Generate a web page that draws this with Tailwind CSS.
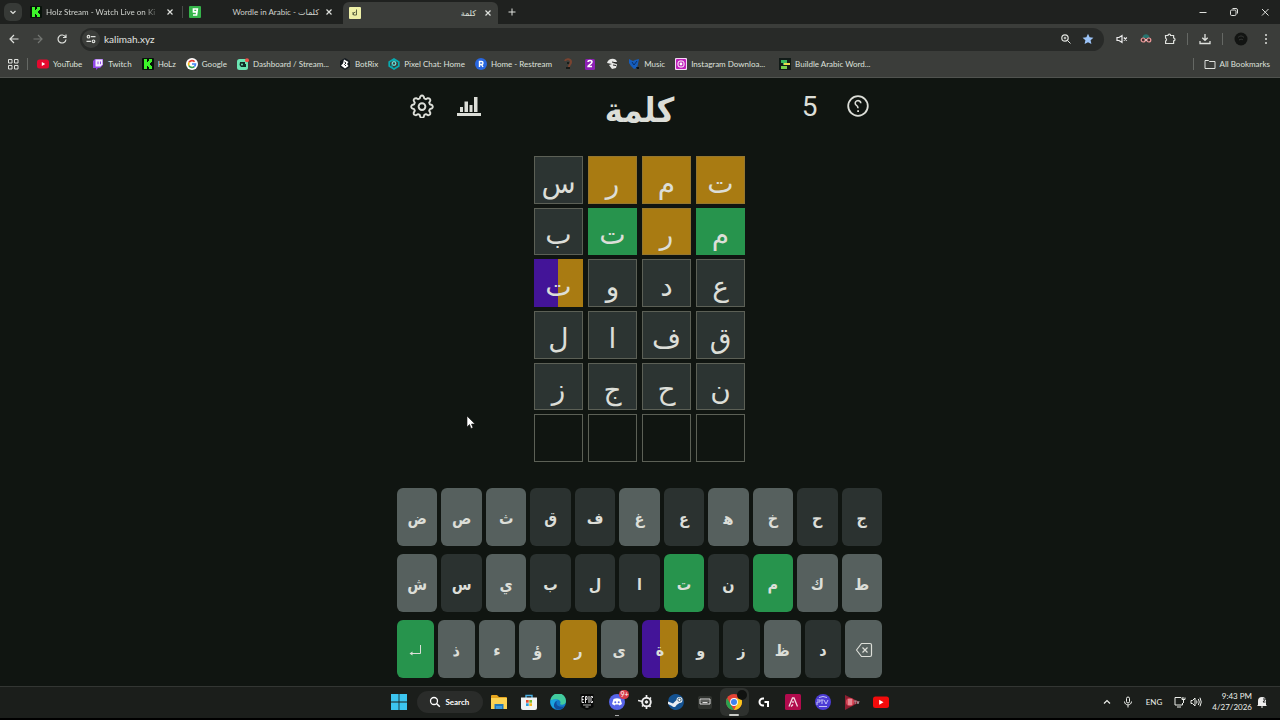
<!DOCTYPE html>
<html lang="en">
<head>
<meta charset="utf-8">
<title>كلمة</title>
<script src="https://cdn.jsdelivr.net/npm/@tailwindcss/browser@4"></script>
</head>
<body class="flex h-screen flex-col overflow-hidden bg-[#101511] font-['Lato','DejaVu_Sans',sans-serif] text-[8px] leading-3 text-[#dfe1dd]">

<!-- Tab strip -->
<header class="shrink-0">
  <div class="flex h-6 items-center bg-[#1f211f]">
    <button aria-label="Search tabs" class="ml-1 flex size-[18px] items-center justify-center rounded-md bg-[#373a37]">
      <svg viewBox="0 0 10 10" class="size-2.5 fill-none stroke-current"><path d="M2.5 4 5 6.4 7.500 4" stroke-width="1.300"/></svg>
    </button>
    <div class="ml-2 flex w-[144px] items-center">
      <svg viewBox="0 0 12 12" class="size-3 shrink-0"><rect width="12" height="12" rx="1" fill="#08120a"/><path d="M2 1h3v3h1V3h1V1h3v3H9v1H8v2h1v1h1v3H7V9H6V8H5v3H2z" fill="#3df52a"/></svg>
      <span class="ml-1 w-[115px] whitespace-nowrap mask-r-from-85% text-[#cfd2cd]">Holz Stream - Watch Live on Ki</span>
      <button aria-label="Close Holz Stream" class="ml-auto"><svg viewBox="0 0 8 8" class="size-2 stroke-current"><path d="M1.500 1.500l5 5m0-5l-5 5" stroke-width="1.200"/></svg></button>
    </div>
    <span class="ml-2 h-3 w-px bg-[#484b48]"></span>
    <div class="ml-1.5 flex w-[144px] items-center">
      <svg viewBox="0 0 12 12" class="size-3 shrink-0"><rect width="12" height="12" rx="1" fill="#35b44a"/><path d="M8 5.800H4.500V3H8.300L7.500 9H4" fill="none" stroke="#fff" stroke-width="1.700"/></svg>
      <span dir="rtl" class="ml-auto whitespace-nowrap text-[#cfd2cd]">كلمات - <bdi>Wordle in Arabic</bdi></span>
      <button aria-label="Close Wordle in Arabic" class="ml-1.5"><svg viewBox="0 0 8 8" class="size-2 stroke-current"><path d="M1.500 1.500l5 5m0-5l-5 5" stroke-width="1.200"/></svg></button>
    </div>
    <div class="mt-0.5 ml-2.5 flex h-[22px] w-[155px] items-center rounded-t-md bg-[#3b3d3a] px-1.5">
      <svg viewBox="0 0 12 12" class="size-3 shrink-0"><rect width="12" height="12" rx="1" fill="#eef0a8"/><path d="M7.500 2.500v5.500H4.500V6l2-1M4 5v3" fill="none" stroke="#5c6340"/></svg>
      <span class="ml-auto">كلمة</span>
      <button aria-label="Close Kalimah" class="ml-2"><svg viewBox="0 0 8 8" class="size-2 stroke-current"><path d="M1.500 1.500l5 5m0-5l-5 5" stroke-width="1.200"/></svg></button>
    </div>
    <button aria-label="New tab" class="ml-2.5"><svg viewBox="0 0 8 8" class="size-2 stroke-current"><path d="M4 .5v7M.5 4h7"/></svg></button>
    <div class="mr-2.5 ml-auto flex items-center gap-[21px]">
      <button aria-label="Minimize"><svg viewBox="0 0 10 10" class="size-2.5 stroke-current"><path d="M1.500 5.500h7"/></svg></button>
      <button aria-label="Restore"><svg viewBox="0 0 10 10" class="size-2.5 fill-none stroke-current"><rect x="1.500" y="3" width="5.500" height="5.500" rx="1.200"/><path d="M3.500 1.500h3.500a1.500 1.500 0 0 1 1.500 1.500v3.500"/></svg></button>
      <button aria-label="Close"><svg viewBox="0 0 10 10" class="size-2.5 stroke-current"><path d="M2 2l6.500 6.500m0-6.500L2 8.500"/></svg></button>
    </div>
  </div>

  <!-- Toolbar -->
  <div class="flex h-7 items-center bg-[#3b3d3a] pt-0.5 pr-2">
    <button aria-label="Back" class="ml-2"><svg viewBox="0 0 12 12" class="size-3 fill-none stroke-current"><path d="M10.500 6H2m4-4L2 6l4 4" stroke-width="1.200"/></svg></button>
    <button aria-label="Forward" disabled class="ml-3 text-[#747773]"><svg viewBox="0 0 12 12" class="size-3 fill-none stroke-current"><path d="M1.500 6H10M6 2l4 4-4 4" stroke-width="1.200"/></svg></button>
    <button aria-label="Reload" class="ml-3"><svg viewBox="0 0 12 12" class="size-3 fill-none stroke-current"><path d="M9.500 4A4 4 0 1 0 10 6.500M10 1.500v3H7" stroke-width="1.200"/></svg></button>
    <div class="ml-3 flex h-[23px] flex-1 items-center rounded-full bg-[#282a28] pr-2.5 pl-0.5">
      <button aria-label="Site information" class="flex size-[18px] items-center justify-center rounded-full bg-[#3b3d3a]">
        <svg viewBox="0 0 12 12" class="size-3 fill-none stroke-current" stroke-width="1.200"><circle cx="3.500" cy="3.700" r="1.300"/><path d="M6 3.700h4.500M1.500 8.300H6"/><circle cx="8.500" cy="8.300" r="1.300"/></svg>
      </button>
      <input aria-label="Address" value="kalimah.xyz" class="ml-1 min-w-0 flex-1 bg-transparent text-[10px] text-[#e2e4e0] outline-none">
      <button aria-label="Zoom"><svg viewBox="0 0 12 12" class="size-3 fill-none stroke-current"><circle cx="5" cy="5" r="3.200" stroke-width="1.200"/><path d="M7.500 7.500l3 3M3.700 5h2.600M5 3.700v2.600"/></svg></button>
      <button aria-label="Bookmark this tab" class="ml-2.5"><svg viewBox="0 0 12 12" class="size-3"><path d="M6 .8l1.600 3.500 3.800.4-2.800 2.600.8 3.800L6 9.200l-3.400 1.900.8-3.800L.6 4.700l3.800-.4z" fill="#9cc4f8"/></svg></button>
    </div>
    <div class="ml-3 flex items-center gap-3">
      <button aria-label="Muted"><svg viewBox="0 0 12 12" class="size-3 fill-none stroke-[#eee]"><path d="M1 4.500h2L6 2.500v7L3 7.500H1z" stroke-width="1.200"/><path d="M7.800 4.500l3 3m0-3l-3 3" stroke-width="1.200"/></svg></button>
      <button aria-label="Incognito extension"><svg viewBox="0 0 12 12" class="size-3 fill-none"><path d="M2.500 5c0-5 7-5 7 0z" fill="#27746f"/><path d="M1 5h10v3H1z" fill="#442c2e"/><circle cx="3.200" cy="7" r="2" stroke="#ef9a9a" stroke-width="1.200"/><circle cx="8.800" cy="7" r="2" stroke="#ef9a9a" stroke-width="1.200"/><path d="M5 7h2" stroke="#fff"/></svg></button>
      <button aria-label="Extensions"><svg viewBox="0 0 12 12" class="size-3 fill-none stroke-current"><path d="M1.500 2.500H4a1.300 1.300 0 0 1 2.600 0h3V5a1.400 1.400 0 0 1 0 2.800v2.700h-8V8a1.500 1.500 0 0 0 0-2.800z" stroke-width="1.200"/></svg></button>
      <span class="-mx-px h-3 w-px bg-[#656864]"></span>
      <button aria-label="Downloads"><svg viewBox="0 0 12 12" class="size-3 fill-none stroke-current"><path d="M6 1v6M3.300 4.700L6 7.300l2.700-2.600M1 8v2.500h10V8" stroke-width="1.300"/></svg></button>
      <span class="-mx-px h-3 w-px bg-[#656864]"></span>
      <button aria-label="Profile"><svg viewBox="0 0 14 14" class="size-3.5"><circle cx="7" cy="7" r="6.500" fill="#121412"/><path d="M4 5.500c2-2 4-2 6 0M5 8c2-1 3-1 4 0" fill="none" stroke="#383b38"/></svg></button>
      <button aria-label="Menu"><svg viewBox="0 0 12 12" class="size-3 fill-current"><circle cx="6" cy="2" r="1"/><circle cx="6" cy="6" r="1"/><circle cx="6" cy="10" r="1"/></svg></button>
    </div>
  </div>

  <!-- Bookmarks -->
  <nav aria-label="Bookmarks" class="flex h-[26px] items-center gap-2.5 border-b border-[#50534f] bg-[#3b3d3a] pr-2.5 pb-0.5 pl-[7px] whitespace-nowrap [&>a]:flex [&>a]:items-center [&>a]:gap-1 [&_svg]:size-3 [&_svg]:shrink-0">
    <button aria-label="Apps"><svg viewBox="0 0 12 12" class="fill-none stroke-current"><path d="M1.500 1.500h3.500v3.500H1.500zM7.500 1.500H11v3.500H7.500zM1.500 7.500h3.500V11H1.500zM7.500 7.500H11V11H7.500z"/></svg></button>
    <span class="-ml-0.5 h-3 w-px bg-[#656864]"></span>
    <a href="#" class="-ml-px"><svg viewBox="0 0 12 12"><rect y="1.500" width="12" height="9" rx="2.500" fill="#e5092f"/><path d="M4.800 4v4L8.200 6z" fill="#fff"/></svg>YouTube</a>
    <a href="#"><svg viewBox="0 0 12 12"><path d="M3 1h8v6L8 10H6L4 12v-2H1V3z" fill="#9147e8"/><path d="M3.500 1.500h7v5l-2 2h-5z" fill="#f4edff"/><path d="M6 3.500v2.700M8.500 3.500v2.700" stroke="#9147e8"/></svg>Twitch</a>
    <a href="#"><svg viewBox="0 0 12 12"><rect width="12" height="12" rx="1" fill="#08120a"/><path d="M2 1h3v3h1V3h1V1h3v3H9v1H8v2h1v1h1v3H7V9H6V8H5v3H2z" fill="#3df52a"/></svg>HoLz</a>
    <a href="#"><svg viewBox="0 0 12 12"><circle cx="6" cy="6" r="6" fill="#fff"/><g fill="none" stroke-width="1.700"><path d="M8.600 3.700A3.500 3.500 0 0 0 3 4.300" stroke="#e44235"/><path d="M3 4.300a3.500 3.500 0 0 0 0 3.400" stroke="#f5bb14"/><path d="M3 7.700a3.500 3.500 0 0 0 5.300 1" stroke="#34a354"/><path d="M8.300 8.700A3.500 3.500 0 0 0 9.500 6H6" stroke="#4285f4"/></g></svg>Google</a>
    <a href="#"><svg viewBox="0 0 12 12"><rect y="1" width="11" height="11" rx="2.500" fill="#6ce7b4"/><path d="M3 4h5v2h1v3H4L2.500 7z" fill="#122e28"/><circle cx="5" cy="6.500" r="1" fill="#6ce7b4"/><circle cx="10" cy="2.200" r="2" fill="#ee5048"/></svg>Dashboard / Stream...</a>
    <a href="#"><svg viewBox="0 0 12 12"><path d="M6 0l5 3v6l-5 3-5-3V3z" fill="#151b20"/><path d="M5 1.500L9.500 4 8 6l1.500 2L6 10.500 2 7.500l2-2z" fill="#fff"/><path d="M5.500 4l1.500 1-1.500 1.500L7 8" stroke="#151b20" fill="none"/></svg>BotRix</a>
    <a href="#"><svg viewBox="0 0 12 12" fill="none"><path d="M1.200 8V4L6 1l4.800 3v4L6 11z" stroke="#08aab0" stroke-width="1.700"/><circle cx="6" cy="5.500" r="1.800" stroke="#6bdfda" stroke-width="1.300"/><path d="M4 6v4" stroke="#08aab0"/></svg>Pixel Chat: Home</a>
    <a href="#"><svg viewBox="0 0 12 12"><circle cx="6" cy="6" r="6" fill="#2866df"/><path d="M4.500 9V3.500h2a1.500 1.500 0 0 1 0 3h-2m2 0L8 9" fill="none" stroke="#fff" stroke-width="1.400"/></svg>Home - Restream</a>
    <a href="#" aria-label="Channel"><svg viewBox="0 0 12 12"><path d="M3 3c1-3 6-2 6 1S7 6 7 9" fill="none" stroke="#7a4330" stroke-width="2"/><path d="M5 4h2v2H5z" fill="#171e1a"/><path d="M4 9h4v2H4z" fill="#181b19"/></svg></a>
    <a href="#" aria-label="Game 2"><svg viewBox="0 0 12 12"><rect x="1" y="1" width="10" height="11" rx="1.500" fill="#8d20b4"/><path d="M4 4c0-2 4-2 4 0S4 7 4 8.500h4" fill="none" stroke="#fff" stroke-width="1.500"/></svg></a>
    <a href="#" aria-label="Helmet"><svg viewBox="0 0 12 12"><path d="M1 5c1-5 9-6 10-1L7 5l4 1-1 4-4 1-3-4 3-1z" fill="#e8e9e7"/><path d="M6 4l5 1M7 7l3 .5" stroke="#222"/></svg></a>
    <a href="#"><svg viewBox="0 0 12 12"><path d="M1 1l4 2 2-1 4-1-1 5-1 4-3 1-3-3-2-3z" fill="#155dbd"/><path d="M4 4l2 3 3-4" fill="none" stroke="#092f69"/><path d="M8 9h3v2H9z" fill="#0b1115"/></svg>Music</a>
    <a href="#"><svg viewBox="0 0 12 12"><rect width="12" height="12" rx="1" fill="#f4d9f6"/><rect x="1" y="1" width="10" height="10" rx="1" fill="#c01fbb"/><rect x="3" y="3" width="6" height="6" rx="2" fill="none" stroke="#fff"/><circle cx="6" cy="6" r="1.400" fill="#fff"/></svg>Instagram Downloa...</a>
    <a href="#" class="ml-1"><svg viewBox="0 0 12 12"><rect width="12" height="12" fill="#121b18"/><path d="M2 2h6v3h3v2H4V5H2z" fill="#3bbb5d"/><path d="M5 5h6v2H5z" fill="#ebda4b"/><path d="M2 8h6v3H2z" fill="#79ce4b"/></svg>Buildle Arabic Word...</a>
    <span class="ml-auto h-3 w-px bg-[#656864]"></span>
    <a href="#"><svg viewBox="0 0 12 12" class="fill-none stroke-current"><path d="M1 2.500h3.500l1 1H11v7H1z"/></svg>All Bookmarks</a>
  </nav>
</header>

<!-- Game -->
<main class="relative flex flex-1 flex-col items-center pr-px font-['DejaVu_Sans_Condensed','DejaVu_Sans',sans-serif] text-[#dcded8]">
  <div class="flex h-14 w-full max-w-[460px] items-center">
    <button aria-label="Settings"><svg viewBox="0 0 24 24" class="size-6 fill-none stroke-current" stroke-width="1.900" stroke-linejoin="round"><path d="M10.300 2.500Q12 .5 13.700 2.500l.6 2 1.600.7 2-1q2.700 0 2.400 2.400l-1.100 2.100.7 1.600 2 .7q1.800 1.600 0 3.400l-2 .7-.7 1.600 1.100 2.100q.2 2.600-2.400 2.400l-2-1-1.600.7-.6 2q-1.700 2-3.400 0l-.6-2-1.600-.7-2 1q-2.700.1-2.400-2.400l1.100-2.100-.7-1.600-2-.7q-1.800-1.700 0-3.400l2-.7.7-1.600-1.100-2.100Q3.500 4.200 6.100 4.200l2 1 1.600-.7z"/><circle cx="12" cy="12.600" r="3.400"/></svg></button>
    <button aria-label="Statistics" class="ml-[22px]"><svg viewBox="0 0 26 26" class="size-[26px] fill-current"><path d="M1 20h24v3H1zM4 14h3v5H4zM8.500 8.500h3.500V19H8.500zM13.500 12h3v7h-3zM18 4h3.500v15H18z"/></svg></button>
    <h1 lang="ar" dir="rtl" class="mx-auto pt-2 text-[34px] leading-10 font-bold">كلمة</h1>
    <button aria-label="Word length" class="w-6 pt-0.5 font-['Roboto',sans-serif] text-[28px] leading-8">5</button>
    <button aria-label="Help" class="ml-6"><svg viewBox="0 0 24 24" class="size-6 fill-none stroke-current" stroke-width="1.800"><circle cx="12" cy="12" r="9.800"/><path d="M14.800 9.300a2.800 2.600 0 1 0-4.300 2.100c1 .6 1.500 1.100 1.500 2.800" stroke-width="1.600"/><path d="M11.200 16.200h1.800v1.800h-1.800z" fill="currentColor" stroke="none"/></svg></button>
  </div>

  <div lang="ar" class="mt-[22px] grid h-[306px] w-[211px] grid-cols-4 grid-rows-6 gap-x-[5px] gap-y-1 font-['DejaVu_Sans',sans-serif] text-[28px] leading-8 [&>div]:flex [&>div]:min-h-0 [&>div]:items-center [&>div]:justify-center [&>div]:border [&>div]:pt-2">
    <div class="border-[#5c6056] bg-[#2c3432]">س</div><div class="border-[#96772e] bg-[#a97b12]">ر</div><div class="border-[#96772e] bg-[#a97b12]">م</div><div class="border-[#96772e] bg-[#a97b12]">ت</div>
    <div class="border-[#5c6056] bg-[#2c3432]">ب</div><div class="border-[#27944d] bg-[#27944d]">ت</div><div class="border-[#96772e] bg-[#a97b12]">ر</div><div class="border-[#27944d] bg-[#27944d]">م</div>
    <div class="border-none! bg-linear-to-r from-[#431498] from-50% to-[#a97b12] to-50%">ت</div><div class="border-[#5c6056] bg-[#2c3432]">و</div><div class="border-[#5c6056] bg-[#2c3432]">د</div><div class="border-[#5c6056] bg-[#2c3432]">ع</div>
    <div class="border-[#5c6056] bg-[#2c3432]">ل</div><div class="border-[#5c6056] bg-[#2c3432]">ا</div><div class="border-[#5c6056] bg-[#2c3432]">ف</div><div class="border-[#5c6056] bg-[#2c3432]">ق</div>
    <div class="border-[#5c6056] bg-[#2c3432]">ز</div><div class="border-[#5c6056] bg-[#2c3432]">ج</div><div class="border-[#5c6056] bg-[#2c3432]">ح</div><div class="border-[#5c6056] bg-[#2c3432]">ن</div>
    <div class="border-[#5c6056]"></div><div class="border-[#5c6056]"></div><div class="border-[#5c6056]"></div><div class="border-[#5c6056]"></div>
  </div>

  <div lang="ar" class="mt-[26px] flex w-full max-w-[485px] flex-col gap-2 text-[16px] leading-5 font-bold [&>div]:flex [&>div]:gap-1 [&_button]:flex [&_button]:h-[58px] [&_button]:flex-1 [&_button]:items-center [&_button]:justify-center [&_button]:rounded-md [&_button]:pt-1">
    <div>
      <button class="bg-[#56605e]">ض</button><button class="bg-[#56605e]">ص</button><button class="bg-[#56605e]">ث</button><button class="bg-[#2b3230]">ق</button><button class="bg-[#2b3230]">ف</button><button class="bg-[#56605e]">غ</button><button class="bg-[#2b3230]">ع</button><button class="bg-[#56605e]">ه&zwj;</button><button class="bg-[#56605e]">خ</button><button class="bg-[#2b3230]">ح</button><button class="bg-[#2b3230]">ج</button>
    </div>
    <div>
      <button class="bg-[#56605e]">ش</button><button class="bg-[#2b3230]">س</button><button class="bg-[#56605e]">ي</button><button class="bg-[#2b3230]">ب</button><button class="bg-[#2b3230]">ل</button><button class="bg-[#2b3230]">ا</button><button class="bg-[#27944d]">ت</button><button class="bg-[#2b3230]">ن</button><button class="bg-[#27944d]">م</button><button class="bg-[#56605e]">ك</button><button class="bg-[#56605e]">ط</button>
    </div>
    <div>
      <button aria-label="Enter" class="bg-[#27944d]"><svg viewBox="0 0 14 14" class="size-3.5 fill-none stroke-current"><path d="M12.500 1v8.500H3"/><path d="M1.500 9.500l3-2v4z" fill="currentColor" stroke="none"/></svg></button><button class="bg-[#56605e]">ذ</button><button class="bg-[#56605e]">ء</button><button class="bg-[#56605e]">ؤ</button><button class="bg-[#a97b12]">ر</button><button class="bg-[#56605e]">ى</button><button class="bg-linear-to-r from-[#431498] from-50% to-[#a97b12] to-50%">ة</button><button class="bg-[#2b3230]">و</button><button class="bg-[#2b3230]">ز</button><button class="bg-[#56605e]">ظ</button><button class="bg-[#2b3230]">د</button><button aria-label="Backspace" class="bg-[#56605e]"><svg viewBox="0 0 18 18" class="size-[18px] fill-none stroke-current" stroke-width="1.200" stroke-linejoin="round"><path d="M6.500 1.500h8.500q1.500 0 1.500 1.500v10q0 1.500-1.500 1.500H6.500L1.500 8z"/><path d="M7.500 5.500l5 5m0-5l-5 5"/></svg></button>
    </div>
  </div>

  <svg viewBox="0 0 10 15" class="absolute top-[337px] left-[466px] h-[15px] w-2.5"><path d="M1 1v11l2.500-2.500L5 13.500l2-.8L5.500 9H9z" fill="#fff" stroke="#111" stroke-width=".6"/></svg>
</main>

<!-- Taskbar -->
<footer class="grid h-[34px] shrink-0 grid-cols-[1fr_auto_1fr] items-center border-t border-b-2 border-t-[#333633] border-b-black bg-[#1b1e1b] pb-px">
  <div class="col-start-2 flex w-[512px] items-center [&>button]:flex [&>button]:h-7 [&>button]:flex-1 [&>button]:items-center [&>button]:justify-center [&>button>svg]:size-4">
    <button aria-label="Start"><svg viewBox="0 0 16 16" fill="#3cc5f0"><path d="M0 0h7.600v7.600H0zM8.400 0H16v7.600H8.400zM0 8.400h7.600V16H0zM8.400 8.400H16V16H8.400z"/></svg></button>
    <label class="mr-px ml-1 flex h-[22px] w-[66px] items-center gap-1 rounded-full bg-[#2a2c2a] pl-3 text-white">
      <svg viewBox="0 0 12 12" class="size-3 shrink-0 fill-none stroke-current"><circle cx="5" cy="5" r="3.500" stroke-width="1.300"/><path d="M7.500 7.500l3.300 3.300" stroke-width="1.500"/></svg>
      <input aria-label="Search" placeholder="Search" class="w-8 min-w-0 bg-transparent font-bold outline-none placeholder:text-white">
    </label>
    <button aria-label="File Explorer"><svg viewBox="0 0 16 16"><path d="M0 2q0-1 1-1h5l2 2h7q1 0 1 1v10H0z" fill="#e6a51e"/><path d="M0 4h16v11H0z" fill="#fbd354"/><path d="M3.500 10h9v5h-9z" fill="#1e77bd"/><path d="M5 12h6v3H5z" fill="#3f9ada"/></svg></button>
    <button aria-label="Store"><svg viewBox="0 0 16 16"><path d="M5 4V1.500h6V4" fill="none" stroke="#49b1e6" stroke-width="1.400"/><path d="M0 3.500h16V14q0 2-2 2H2q-2 0-2-2z" fill="#f0f2f3"/><path d="M5 6h2.700v2.700H5z" fill="#e9492c"/><path d="M8.300 6H11v2.700H8.300z" fill="#76b82a"/><path d="M5 9.300h2.700V12H5z" fill="#279fe0"/><path d="M8.300 9.300H11V12H8.300z" fill="#f6b51c"/></svg></button>
    <button aria-label="Edge"><svg viewBox="0 0 16 16"><circle cx="8" cy="8" r="8" fill="#1379c9"/><path d="M.5 7A7.600 7.600 0 0 1 16 7c0 4-5 4.500-6 3 1.500-2-.3-4.500-3-4.500C4 5.500 1.500 6 .5 7z" fill="#42cb9d"/><path d="M.5 7C2 5 6 4.500 8 6 4 6.500 4 12 8 14c-5 2-8-3-7.500-7z" fill="#1ba4df"/><path d="M7 7c-2 3 1 7 7.500 5.500-3 4-9 4-10.500 0C3.500 10 5 7.500 7 7z" fill="#104e9d"/></svg></button>
    <button aria-label="Epic Games"><svg viewBox="0 0 16 16"><path d="M1.500 0h13v13L8 16l-6.500-3z" fill="#080908"/><path d="M5 2.500H3v6h2M3 5.500h1.700M6.500 9V2.500H8v3H6.500M10 2v7M13.500 4V2.500H12v6h1.500V7" fill="none" stroke="#fff" stroke-width=".9"/><path d="M4 11h8M6.500 13h3" stroke="#ddd" stroke-width=".8"/></svg></button>
    <button aria-label="Discord, 9+ notifications" class="relative"><svg viewBox="0 0 16 16"><circle cx="8" cy="8" r="8" fill="#5664e8"/><path d="M4.500 5q3.500-1.500 7 0l1.500 5-2.500 1.500L9.500 10.500h-3L5.500 11.500 3 10z" fill="#fff"/><circle cx="6.300" cy="8.300" r="1" fill="#5664e8"/><circle cx="9.700" cy="8.300" r="1" fill="#5664e8"/></svg><span class="absolute top-0.5 right-0.5 flex h-[9px] w-2.5 items-center justify-center rounded-full bg-[#d93d4b] text-[7px] leading-none text-white">9+</span><span class="absolute bottom-0 h-px w-1 bg-[#aaa]"></span></button>
    <button aria-label="SteelSeries"><svg viewBox="0 0 16 16" fill="none" stroke="#eee"><circle cx="8.500" cy="8" r="4.300" stroke-width="1.900"/><circle cx="8.500" cy="8" r="1.300" fill="#eee"/><path d="M0 6.500l4.500 1M8.500 3V1M13 3.500L11.500 5M12.500 13l-1-1.500M8.500 15v-2M4 12.500L5.500 11" stroke-width="1.700"/></svg></button>
    <button aria-label="Steam"><svg viewBox="0 0 16 16"><path d="M.5 5a8 8 0 1 1 0 6z" fill="#145291"/><path d="M0 7.500l5 2 3.500-3.500a3 3 0 1 1 3 3L8.500 11a2.500 2.500 0 0 1-4.500 1L0 10z" fill="#e9eef3"/><circle cx="11.500" cy="5.800" r="1.600" fill="#fff" stroke="#245" stroke-width=".8"/></svg></button>
    <button aria-label="Keyboard"><svg viewBox="0 0 16 16"><rect x="1" y="2" width="14" height="13" rx="2" fill="#30332f"/><path d="M3 5h10v5H3z" fill="none" stroke="#ddd"/><path d="M4.500 7h1m1 0h1m1 0h1m1 0h1M5.500 8.500h5" stroke="#ddd"/></svg></button>
    <button aria-label="Chrome" class="relative rounded-md bg-[#2e312e]"><svg viewBox="0 0 16 16"><circle cx="8" cy="8" r="8" fill="#e54335"/><path d="M1.100 4L5 11l3 5A8 8 0 0 1 1.100 4z" fill="#29a350"/><path d="M8 4.500h7.200A8 8 0 0 1 8 16l3-6z" fill="#f9c61b"/><circle cx="8" cy="8" r="3.900" fill="#fff"/><circle cx="8" cy="8" r="3" fill="#3e82ee"/></svg><span class="absolute top-0.5 right-0.5 size-2.5 rounded-full bg-[#101210]"></span><span class="absolute bottom-0 h-0.5 w-2.5 rounded-full bg-[#c9ccc7]"></span></button>
    <button aria-label="Logitech G Hub"><svg viewBox="0 0 16 16" fill="none"><path d="M8 4.500H7a3.500 3.500 0 0 0 0 7h1M8.500 8H12v5" stroke="#fff" stroke-width="2"/></svg></button>
    <button aria-label="Recorder"><svg viewBox="0 0 16 16"><rect width="16" height="16" rx="1.500" fill="#b20b4d"/><path d="M4 12.500L7.500 4H9l3.500 8.500M8 7v2M6 12.500l2-2" fill="none" stroke="#f2d9e2" stroke-width="1.300"/></svg></button>
    <button aria-label="PTV"><svg viewBox="0 0 16 16"><circle cx="8" cy="8" r="8" fill="#4c3cd5"/><path d="M2 6h3v2H2v3M5.500 6h3M7 6v4M9 6l2 4 2-4M4 3.500q4-2 8 0M4 12.500h8" fill="none" stroke="#c4c2f5"/></svg></button>
    <button aria-label="TV app"><svg viewBox="0 0 16 16"><path d="M1 1l15 7-15 8z" fill="#8e1e31"/><circle cx="6" cy="8" r="4" fill="#d84a59"/><path d="M4 6h4M4 8h4M4 10h4" stroke="#fff" stroke-width=".7"/><path d="M10 7h2.500M11.200 7v3M13 7l1 3 1-3" stroke="#aaa" stroke-width=".8" fill="none"/></svg></button>
    <button aria-label="YouTube"><svg viewBox="0 0 16 16"><rect y="2.500" width="16" height="11.500" rx="2.500" fill="#f20b0b"/><path d="M6.200 5.700v5l4.300-2.500z" fill="#fff"/></svg></button>
  </div>
  <div class="flex items-center justify-end pr-3 text-[#eceeea]">
    <button aria-label="Hidden icons"><svg viewBox="0 0 10 10" class="size-2.5 fill-none stroke-current"><path d="M2 6.500L5 3.500l3 3" stroke-width="1.200"/></svg></button>
    <button aria-label="Microphone" class="ml-2.5"><svg viewBox="0 0 12 12" class="size-3 fill-none stroke-current"><rect x="4.500" y="1" width="3" height="6" rx="1.500"/><path d="M2.500 5.500c0 4.500 7 4.500 7 0M6 9v2.500"/></svg></button>
    <button class="ml-3">ENG</button>
    <button aria-label="Network and volume" class="ml-3 flex gap-1"><svg viewBox="0 0 12 12" class="size-3 fill-none stroke-current"><path d="M7 1.500H1v7.500h7.500V7M3 11h4M9 1v3M8 1.500v2h3v-2M9.500 4v3"/></svg><svg viewBox="0 0 12 12" class="size-3 fill-none stroke-current"><path d="M1 4.500h1.500L5 2v8L2.500 7.500H1zM6.500 4.500q1 1.500 0 3M8.300 3q2 3 0 6M10 1.700q2.500 4.300 0 8.600"/></svg></button>
    <button class="ml-2.5 text-right leading-[11px]">9:43 PM<br>4/27/2026</button>
    <button aria-label="Notifications" class="ml-1"><svg viewBox="0 0 12 12" class="size-3"><path d="M2 9V5a4 4 0 0 1 8 0v4l1 1H1z" fill="#eee"/><path d="M5 11h2" stroke="#eee"/><path d="M7 3h2.500L7 6h2.500" fill="none" stroke="#222"/></svg></button>
  </div>
</footer>
</body>
</html>
